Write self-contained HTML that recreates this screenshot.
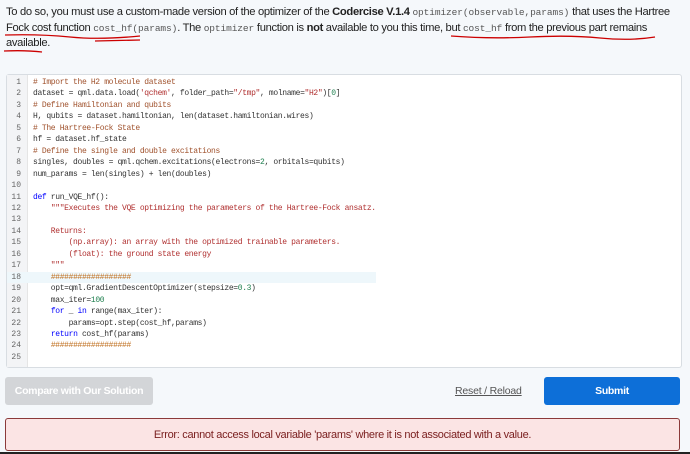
<!DOCTYPE html>
<html><head><meta charset="utf-8"><style>
body{margin:0;width:690px;height:454px;background:#f5f8fb;position:relative;overflow:hidden;font-family:"Liberation Sans",sans-serif;}
.p{position:absolute;left:6px;top:5px;font-size:11.2px;line-height:15.5px;color:#222;letter-spacing:-0.32px;white-space:nowrap}
.p code{font-family:"Liberation Mono",monospace;font-size:9.5px;color:#555;letter-spacing:-0.1px}
.box{position:absolute;left:6px;top:74px;width:674px;height:292px;background:#fff;border:1px solid #d8dde2;border-radius:3px}
.gut{position:absolute;left:0;top:0;width:20px;height:292px;background:#f3f4f6;border-right:1px solid #e5e5e5}
.code{position:absolute;left:0;top:2px;font-family:"Liberation Mono",monospace;font-size:8px;letter-spacing:-0.35px;line-height:11.45px;white-space:pre;color:#333}
.ln{display:inline-block;width:20px;text-align:right;padding-right:6px;color:#666;box-sizing:border-box;margin-right:6px;letter-spacing:0}
.c{color:#a0522d}.s{color:#b03030}.n{color:#208050}.h{color:#c07020}
.hl{background:#eef7fb;display:block}
.btn{position:absolute;top:377px;height:28px;border-radius:3px;color:#fff;font-weight:bold;font-size:10.5px;display:flex;align-items:center;justify-content:center;letter-spacing:-0.3px}
.err{position:absolute;left:5px;top:418px;width:673px;height:31px;background:#fbe4e4;border:1px solid #8b3a3a;border-radius:3px;color:#7b2020;font-size:11px;letter-spacing:-0.3px;display:flex;align-items:center;justify-content:center}
</style></head><body>
<div class="p">To do so, you must use a custom-made version of the optimizer of the <b>Codercise V.1.4</b> <code>optimizer(observable,params)</code> that uses the Hartree<br>Fock cost function <code>cost_hf(params)</code>. The <code>optimizer</code> function is <b>not</b> available to you this time, but <code>cost_hf</code> from the previous part remains<br>available.</div>
<svg style="position:absolute;left:0;top:0" width="690" height="60"><g fill="none" stroke="#c00" stroke-width="1.3">
<path d="M5 35 Q40 34 70 37 T140 36"/><path d="M95 41 L140 40"/><path d="M451 36 Q490 39 530 37 T600 38 T655 37"/><path d="M4 51 Q25 50 42 52"/></g></svg>
<div class="box"><div class="gut"></div><div class="code"><span class="ln">1</span><span class="c"># Import the H2 molecule dataset</span>
<span class="ln">2</span>dataset = qml.data.load(<span class="s">'qchem'</span>, folder_path=<span class="s">"/tmp"</span>, molname=<span class="s">"H2"</span>)[<span class="n">0</span>]
<span class="ln">3</span><span class="c"># Define Hamiltonian and qubits</span>
<span class="ln">4</span>H, qubits = dataset.hamiltonian, len(dataset.hamiltonian.wires)
<span class="ln">5</span><span class="c"># The Hartree-Fock State</span>
<span class="ln">6</span>hf = dataset.hf_state
<span class="ln">7</span><span class="c"># Define the single and double excitations</span>
<span class="ln">8</span>singles, doubles = qml.qchem.excitations(electrons=<span class="n">2</span>, orbitals=qubits)
<span class="ln">9</span>num_params = len(singles) + len(doubles)
<span class="ln">10</span>
<span class="ln">11</span><span style="color:#00f">def</span> run_VQE_hf():
<span class="ln">12</span>    <span class="s">"""Executes the VQE optimizing the parameters of the Hartree-Fock ansatz.</span>
<span class="ln">13</span>
<span class="ln">14</span><span class="s">    Returns:</span>
<span class="ln">15</span><span class="s">        (np.array): an array with the optimized trainable parameters.</span>
<span class="ln">16</span><span class="s">        (float): the ground state energy</span>
<span class="ln">17</span><span class="s">    """</span>
<span class="hl"><span class="ln">18</span>    <span class="h">##################</span></span><span class="ln">19</span>    opt=qml.GradientDescentOptimizer(stepsize=<span class="n">0.3</span>)
<span class="ln">20</span>    max_iter=<span class="n">100</span>
<span class="ln">21</span>    <span style="color:#00f">for</span> _ <span style="color:#00f">in</span> range(max_iter):
<span class="ln">22</span>        params=opt.step(cost_hf,params)
<span class="ln">23</span>    <span style="color:#00f">return</span> cost_hf(params)
<span class="ln">24</span>    <span class="h">##################</span>
<span class="ln">25</span></div></div>
<div class="btn" style="left:5px;width:148px;background:#d3d5d8">Compare with Our Solution</div>
<div style="position:absolute;left:455px;top:385px;font-size:10.5px;letter-spacing:-0.2px;color:#555;text-decoration:underline">Reset / Reload</div>
<div class="btn" style="left:544px;width:136px;background:#0d6fd8">Submit</div>
<div class="err">Error: cannot access local variable 'params' where it is not associated with a value.</div>
<div style="position:absolute;left:0;top:452px;width:690px;height:2px;background:#222"></div>
</body></html>
